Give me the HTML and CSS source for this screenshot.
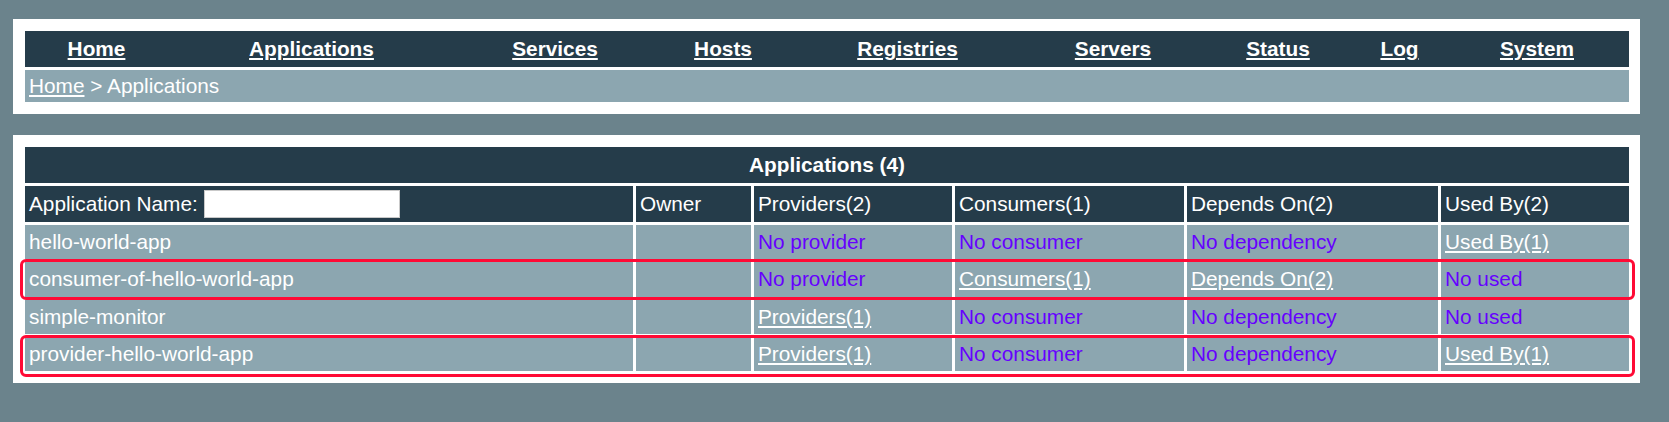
FILE: index.html
```html
<!DOCTYPE html>
<html lang="en">
<head>
<meta charset="utf-8">
<title>Applications</title>
<link rel="stylesheet" href="styles.css">
</head>
<body>
<div class="panel top-panel">
  <nav class="menu">
    <a href="#">Home</a>
    <a href="#">Applications</a>
    <a href="#">Services</a>
    <a href="#">Hosts</a>
    <a href="#">Registries</a>
    <a href="#">Servers</a>
    <a href="#">Status</a>
    <a href="#">Log</a>
    <a href="#">System</a>
  </nav>
  <div class="crumb"><a href="#">Home</a>&nbsp;&gt; Applications</div>
</div>

<div class="panel list-panel">
  <table class="apps">
    <colgroup>
      <col class="c-name">
      <col class="c-owner">
      <col class="c-prov">
      <col class="c-cons">
      <col class="c-dep">
      <col class="c-used">
    </colgroup>
    <thead>
      <tr class="title"><th colspan="6">Applications (4)</th></tr>
      <tr class="heads">
        <th><div class="name-filter"><span>Application Name:</span><input class="filter" type="text"></div></th>
        <th>Owner</th>
        <th>Providers(2)</th>
        <th>Consumers(1)</th>
        <th>Depends On(2)</th>
        <th>Used By(2)</th>
      </tr>
    </thead>
    <tbody>
      <tr>
        <td>hello-world-app</td>
        <td></td>
        <td class="none">No provider</td>
        <td class="none">No consumer</td>
        <td class="none">No dependency</td>
        <td><a href="#">Used By(1)</a></td>
      </tr>
      <tr>
        <td>consumer-of-hello-world-app</td>
        <td></td>
        <td class="none">No provider</td>
        <td><a href="#">Consumers(1)</a></td>
        <td><a href="#">Depends On(2)</a></td>
        <td class="none">No used</td>
      </tr>
      <tr>
        <td>simple-monitor</td>
        <td></td>
        <td><a href="#">Providers(1)</a></td>
        <td class="none">No consumer</td>
        <td class="none">No dependency</td>
        <td class="none">No used</td>
      </tr>
      <tr>
        <td>provider-hello-world-app</td>
        <td></td>
        <td><a href="#">Providers(1)</a></td>
        <td class="none">No consumer</td>
        <td class="none">No dependency</td>
        <td><a href="#">Used By(1)</a></td>
      </tr>
    </tbody>
  </table>
  <div class="mark mark-second"></div>
  <div class="mark mark-fourth"></div>
</div>
</body>
</html>
```

FILE: styles.css
```css
html, body {
  margin: 0;
}

html {
  background: #6b838c;
}

body {
  font-family: "Liberation Sans", Arial, Helvetica, sans-serif;
  font-size: 20.8px;
  line-height: normal;
  color: #ffffff;
  padding: 19px 0 0 13px;
}

.panel {
  background: #ffffff;
  width: 1627px;
  box-sizing: border-box;
}

.top-panel {
  padding: 12px 11px 12px 12px;
}

.menu {
  display: grid;
  grid-template-columns: 143px 287px 200px 136px 233px 178px 152px 91px 184px;
  height: 36px;
  background: #253c4a;
  align-items: center;
  justify-items: center;
}

.menu a {
  color: #ffffff;
  font-weight: bold;
}

.crumb {
  margin-top: 3px;
  height: 32px;
  background: #8ca6b0;
  display: flex;
  align-items: center;
  padding-left: 4px;
}

.crumb a {
  color: #ffffff;
}

.list-panel {
  margin-top: 21px;
  position: relative;
  padding: 9px 8px 9px 9px;
}

.apps {
  border-collapse: separate;
  border-spacing: 3px;
  table-layout: fixed;
  width: 1610px;
}

.c-name { width: 608px; }
.c-owner { width: 115px; }
.c-prov { width: 198px; }
.c-cons { width: 229px; }
.c-dep { width: 251px; }
.c-used { width: 188px; }

.apps th,
.apps td {
  padding: 0 4px;
  vertical-align: middle;
  text-align: left;
  font-weight: normal;
  white-space: nowrap;
  overflow: hidden;
}

.apps thead th {
  background: #253c4a;
  height: 36px;
}

.apps .title th {
  text-align: center;
  font-weight: bold;
}

.name-filter {
  display: flex;
  align-items: center;
  gap: 6px;
  height: 28px;
}

.filter {
  width: 196px;
  height: 28px;
  box-sizing: border-box;
  border: 1px solid #c9c9c9;
  background: #ffffff;
  margin: 0;
  padding: 0 4px;
  font: inherit;
}

.apps tbody td {
  background: #8ca6b0;
  height: 34.3px;
}

.apps a {
  color: #ffffff;
}

.apps .none {
  color: #6600ff;
}

.mark {
  position: absolute;
  left: 7px;
  width: 1615px;
  border: 3px solid #ff0a35;
  border-radius: 6px;
  box-sizing: border-box;
  pointer-events: none;
}

.mark-second {
  top: 124px;
  height: 41px;
}

.mark-fourth {
  top: 200px;
  height: 42px;
}
```
